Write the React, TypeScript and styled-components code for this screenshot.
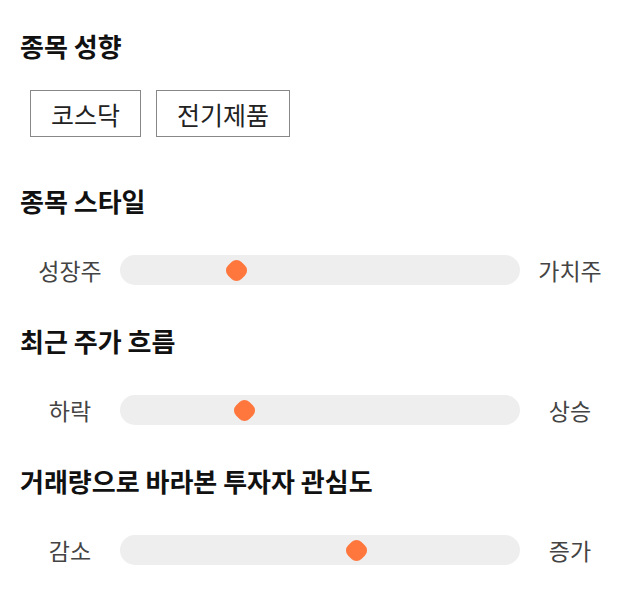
import styled, { createGlobalStyle } from 'styled-components';

const GlobalStyle = createGlobalStyle`
  body {
    margin: 0;
    background: #ffffff;
    font-family: 'Noto Sans CJK KR', 'Noto Sans', sans-serif;
    color: #111;
  }
`;

interface SliderData {
  title: string;
  left: string;
  right: string;
  value: number;
}

const sliders: SliderData[] = [
  { title: '종목 스타일', left: '성장주', right: '가치주', value: 0.29 },
  { title: '최근 주가 흐름', left: '하락', right: '상승', value: 0.31 },
  { title: '거래량으로 바라본 투자자 관심도', left: '감소', right: '증가', value: 0.59 },
];

const tags = ['코스닥', '전기제품'];

const App = () => {
  return (
    <StyledPage>
      <GlobalStyle />
      <StyledSection $gap={48}>
        <StyledTitle>종목 성향</StyledTitle>
        <StyledTags>
          {tags.map((tag) => (
            <StyledTag key={tag}>{tag}</StyledTag>
          ))}
        </StyledTags>
      </StyledSection>
      {sliders.map((s) => (
        <StyledSection key={s.title} $gap={40}>
          <StyledTitle>{s.title}</StyledTitle>
          <StyledSliderRow>
            <StyledLabel>{s.left}</StyledLabel>
            <StyledTrack>
              <StyledThumb style={{ left: `${s.value * 100}%` }} />
            </StyledTrack>
            <StyledLabel>{s.right}</StyledLabel>
          </StyledSliderRow>
        </StyledSection>
      ))}
    </StyledPage>
  );
};

export default App;

const StyledPage = styled.div`
  width: 640px;
  padding: 30px 20px 0;
  box-sizing: border-box;
`;

const StyledSection = styled.div<{ $gap: number }>`
  display: flex;
  flex-direction: column;
  margin-bottom: ${(p) => p.$gap}px;
`;

const StyledTitle = styled.h2`
  margin: 0;
  font-size: 26px;
  font-weight: 700;
  line-height: 32px;
  color: #111;
`;

const StyledTags = styled.div`
  display: flex;
  gap: 15px;
  margin-top: 28px;
  padding-left: 10px;
`;

const StyledTag = styled.div`
  height: 47px;
  padding: 0 20px;
  box-sizing: border-box;
  border: 1px solid #888;
  display: flex;
  align-items: center;
  font-size: 25px;
  color: #222;
`;

const StyledSliderRow = styled.div`
  display: flex;
  align-items: center;
  margin-top: 38px;
  height: 30px;
`;

const StyledLabel = styled.div`
  width: 100px;
  text-align: center;
  font-size: 23px;
  color: #444;
  line-height: 30px;
`;

const StyledTrack = styled.div`
  position: relative;
  flex: 1;
  height: 30px;
  border-radius: 15px;
  background: #eeeeee;
`;

const StyledThumb = styled.div`
  position: absolute;
  top: 50%;
  width: 19px;
  height: 19px;
  margin-left: -9.5px;
  margin-top: -9.5px;
  background: #ff773d;
  border-radius: 7px;
  transform: rotate(45deg);
`;
